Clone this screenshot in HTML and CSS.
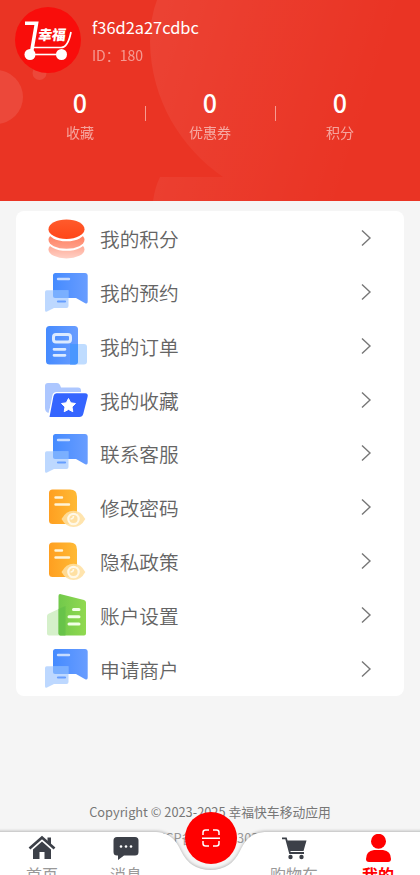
FILE: index.html
```html
<!DOCTYPE html>
<html lang="zh-CN">
<head>
<meta charset="utf-8">
<title>我的</title>
<link rel="stylesheet" href="styles.css">
</head>
<body>
<svg class="defs" width="0" height="0">
  <defs>
    <linearGradient id="blue"><stop offset="0" stop-color="#458bff"/><stop offset="1" stop-color="#699dff"/></linearGradient>
    <linearGradient id="orange"><stop offset="0" stop-color="#ff9f20"/><stop offset="1" stop-color="#ffba36"/></linearGradient>
    <linearGradient id="green"><stop offset="0" stop-color="#71c94b"/><stop offset="1" stop-color="#91d950"/></linearGradient>
    <linearGradient id="coin" x2="0" y2="1"><stop offset="0" stop-color="#ff5b2c"/><stop offset="1" stop-color="#ff4618"/></linearGradient>
    <linearGradient id="coin2" x2="0" y2="1"><stop offset="0" stop-color="#ff7654"/><stop offset="1" stop-color="#ffa08a"/></linearGradient>
    <linearGradient id="coin3" x2="0" y2="1"><stop offset="0" stop-color="#ff9a83"/><stop offset="1" stop-color="#ffd0c5"/></linearGradient>
    <linearGradient id="sheen" gradientUnits="userSpaceOnUse" x1="150" y1="40" x2="370" y2="110"><stop offset="0" stop-color="#fff" stop-opacity=".07"/><stop offset="1" stop-color="#fff" stop-opacity="0"/></linearGradient>
  </defs>
  <symbol id="i-points" viewBox="0 0 48 48">
    <ellipse cx="24.500" cy="33.500" rx="18" ry="9" fill="url(#coin3)"/>
    <ellipse cx="24.500" cy="25" rx="19" ry="9.800" fill="#fff"/>
    <ellipse cx="24.500" cy="23.800" rx="18" ry="9" fill="url(#coin2)"/>
    <ellipse cx="24.500" cy="14.500" rx="19" ry="10.800" fill="#fff"/>
    <ellipse cx="24.500" cy="13.200" rx="18" ry="9.700" fill="url(#coin)"/>
  </symbol>
  <symbol id="i-chat" viewBox="0 0 48 48">
    <path d="M11 5.500q0-2.500 2.500-2.500h29.800q2.400 0 2.400 2.500v26q0 3-2.500 1.700L34 28H13.500Q11 28 11 25.500z" fill="url(#blue)"/>
    <path d="M3 22q0-1.800 1.800-1.800h21.700V36q0 2-2 2H12l-7 3.500q-2.200 1-2-1.500z" fill="#a7cbff" opacity=".75"/>
    <path d="M11 20.200h15.500V28H13.500Q11 28 11 25.500z" fill="#6ba6ff" opacity=".6"/>
    <path d="M16 9h11" stroke="#c7dcff" stroke-width="2.400" stroke-linecap="round"/>
    <path d="M16 31.500h7" stroke="#669eff" stroke-width="2.200" stroke-linecap="round"/>
  </symbol>
  <symbol id="i-order" viewBox="0 0 48 48">
    <rect x="27.500" y="21" width="17.500" height="20.500" rx="3" fill="#bfdcff"/>
    <rect x="4" y="3" width="32" height="38.500" rx="3.500" fill="url(#blue)"/>
    <path d="M28 21h8v17q0 3.500-3 3.500h-5z" fill="#4997ff"/>
    <rect x="11.500" y="11.500" width="17" height="7.500" rx="2.500" fill="none" stroke="#dceaff" stroke-width="3"/>
    <path d="M12 26.300h11M12 32.300h11" stroke="#dceaff" stroke-width="2.700" stroke-linecap="round"/>
  </symbol>
  <symbol id="i-fav" viewBox="0 0 48 48">
    <path d="M3 9q0-3 3-3h9q2 0 3 2l1 2.500h17q3 0 3 3V20H11L6.500 36Q3 35 3 31z" fill="#adc7ff"/>
    <path d="M14.500 16.200H43q3.500 0 2.600 3.500l-4.300 17q-.9 3.300-4 3.300H7.500l4-21q.6-2.800 3-2.800z" fill="#3565ff" stroke="#fff" stroke-width="2.400" paint-order="stroke"/>
    <path d="m26.500 21.500 2.200 4.300 4.800.7-3.500 3.400.8 4.800-4.300-2.300-4.300 2.300.8-4.800-3.500-3.400 4.800-.7z" fill="#fff" stroke="#fff" stroke-linejoin="round"/>
  </symbol>
  <symbol id="i-doc" viewBox="0 0 48 48">
    <path d="M7 8q0-3.500 3.500-3.500H28q7 0 7 7V35q0 4-4 4H10.500Q7 39 7 35.500z" fill="url(#orange)"/>
    <path d="M13.500 12.500h6.500M13.500 19.500h13.500" stroke="#fff4d7" stroke-width="2.400" stroke-linecap="round"/>
    <path d="M19.500 34q4.500-8.300 12-8.300T43.300 34q-4.300 8-11.800 8t-12-8z" fill="#ffe0a2" opacity=".88"/>
    <circle cx="31.500" cy="34" r="5.200" fill="#ffe0a2" stroke="#fff8e7" stroke-width="2.200"/>
    <path d="M28.500 34a3 3 0 0 0 3-3" fill="none" stroke="#fff8e7" stroke-width="1.500"/>
  </symbol>
  <symbol id="i-account" viewBox="0 0 48 48">
    <path d="M5 24q0-1.500 1.500-2.200L23 14v29.500H7q-2 0-2-2z" fill="#d5f0ca"/>
    <path d="M16.500 4q0-2.500 2.500-1.800L42 8q2 .5 2 2.500v31q0 2-2 2H18.500q-2 0-2-2z" fill="url(#green)"/>
    <path d="M16.500 17 23.500 14v29.500h-5q-2 0-2-2z" fill="#61bf48" opacity=".65"/>
    <path d="M31.500 17.500H37M27 24.700h10M27 31.900h10" stroke="#f2ffe7" stroke-width="3" stroke-linecap="round"/>
  </symbol>
  <symbol id="i-arrow" viewBox="0 0 12 18"><path d="m2 1.500 8 7.500-8 7.500" fill="none" stroke="#777" stroke-width="1.400"/></symbol>
</svg>
<div class="screen">
  <header class="hero">
    <svg class="hero-art" viewBox="0 0 420 201">
      <circle cx="-4" cy="97" r="27" fill="#fff" opacity=".1"/>
      <circle cx="39.500" cy="73" r="7" fill="#fff" opacity=".1"/>
      <path d="M157 0Q150 18 150 42C151 100 181 148 223 177H420V0z" fill="url(#sheen)"/>
      <path d="M160 177H420V201H153Q155 187 160 177z" fill="url(#sheen)"/>
    </svg>
    <div class="profile">
      <svg class="avatar" viewBox="0 0 66 66">
        <circle cx="33" cy="33" r="33" fill="#f90d0b"/>
        <path d="M10 16.200h11.500l-5 29" fill="none" stroke="#fff" stroke-width="3.600"/>
        <path d="M18 40.500h28q7 0 10-15.500" fill="none" stroke="#fff" stroke-width="1.700"/>
        <path d="M15 47.500h32" stroke="#fff" stroke-width="1.600"/>
        <circle cx="15" cy="47.500" r="5.500" fill="#fff"/><circle cx="46.500" cy="47.500" r="5.500" fill="#fff"/>
        <text class="logo-text" x="22" y="32.800" transform="translate(5 0) skewX(-8)">幸福</text>
      </svg>
      <div class="who"><div class="name">f36d2a27cdbc</div><div class="uid">ID：180</div></div>
    </div>
    <div class="stats">
      <div class="stat"><b>0</b><span>收藏</span></div>
      <div class="stat"><b>0</b><span>优惠券</span></div>
      <div class="stat"><b>0</b><span>积分</span></div>
    </div>
  </header>
  <main class="menu">
    <div class="row"><svg class="ico"><use href="#i-points"/></svg><span>我的积分</span><svg class="arrow"><use href="#i-arrow"/></svg></div>
    <div class="row"><svg class="ico"><use href="#i-chat"/></svg><span>我的预约</span><svg class="arrow"><use href="#i-arrow"/></svg></div>
    <div class="row"><svg class="ico"><use href="#i-order"/></svg><span>我的订单</span><svg class="arrow"><use href="#i-arrow"/></svg></div>
    <div class="row"><svg class="ico"><use href="#i-fav"/></svg><span>我的收藏</span><svg class="arrow"><use href="#i-arrow"/></svg></div>
    <div class="row"><svg class="ico"><use href="#i-chat"/></svg><span>联系客服</span><svg class="arrow"><use href="#i-arrow"/></svg></div>
    <div class="row"><svg class="ico"><use href="#i-doc"/></svg><span>修改密码</span><svg class="arrow"><use href="#i-arrow"/></svg></div>
    <div class="row"><svg class="ico"><use href="#i-doc"/></svg><span>隐私政策</span><svg class="arrow"><use href="#i-arrow"/></svg></div>
    <div class="row"><svg class="ico"><use href="#i-account"/></svg><span>账户设置</span><svg class="arrow"><use href="#i-arrow"/></svg></div>
    <div class="row"><svg class="ico"><use href="#i-chat"/></svg><span>申请商户</span><svg class="arrow"><use href="#i-arrow"/></svg></div>
  </main>
  <footer class="legal"><div>Copyright © 2023-2025 幸福快车移动应用</div><div class="icp">蜀ICP备202300303号</div></footer>
  <nav class="tabbar">
    <svg class="bar-bg" viewBox="0 0 420 75">
      <path class="bar-shape" d="M-5 32H153C170 32 176 40 181 51Q190 70 210.500 70T240 51C245 40 251 32 268 32H425V85H-5z"/>
    </svg>
    <div class="tabs">
      <div class="tab"><svg viewBox="0 0 28 28"><path d="M1.500 14.500 14 3.500l12.500 11" fill="none" stroke="#3c4048" stroke-width="2.700"/><path d="M19.500 3.500H23V11l-3.500-3zM5 15.500l9-8 9 8V25h-6.500v-7h-5v7H5z" fill="#3c4048"/></svg><span>首页</span></div>
      <div class="tab"><svg viewBox="0 0 28 28"><path d="M5 3h18q3.500 0 3.500 3.500V18q0 3.500-3.500 3.500H12L6 26v-4.500H5Q1.500 21.500 1.500 18V6.500Q1.500 3 5 3z" fill="#3c4048"/><g fill="#fff"><circle cx="9" cy="12.500" r="1.300"/><circle cx="14" cy="12.500" r="1.300"/><circle cx="19" cy="12.500" r="1.300"/></g></svg><span>消息</span></div>
      <div class="tab"></div>
      <div class="tab"><svg viewBox="0 0 28 28"><path d="M2 4.300h4l4 14.700h14" fill="none" stroke="#3c4048" stroke-width="1.800"/><path d="M7 6.500h19.500L23.500 17H9.800z" fill="#3c4048"/><circle cx="10.500" cy="23" r="2.200" fill="#3c4048"/><circle cx="21.500" cy="23" r="2.200" fill="#3c4048"/></svg><span>购物车</span></div>
      <div class="tab active"><svg viewBox="0 0 28 28"><circle cx="14.500" cy="7.300" r="7.500" fill="red"/><path d="M2 25q0-8 8-9h9q8 1 8 9 0 3-3 3H5q-3 0-3-3z" fill="red"/></svg><span>我的</span></div>
    </div>
    <div class="scan"><svg viewBox="0 0 20 20"><path d="M2 7V4.500Q2 2 4.500 2H8M12 2h3.500Q18 2 18 4.500V7M2 13v2.500Q2 18 4.500 18H8M12 18h3.500q2.500 0 2.500-2.500V13M1 10.300h18" fill="none" stroke="#fff" stroke-width="1.500"/></svg></div>
  </nav>
</div>
</body>
</html>
```
FILE: styles.css
```css
* { box-sizing: border-box; }
body { margin: 0; background: #f5f5f5; font-family: "Noto Sans CJK SC", sans-serif; }
.defs { position: absolute; }
.screen { position: relative; width: 420px; height: 875px; overflow: hidden; display: flex; flex-direction: column; }
.hero { position: relative; height: 201px; background: #ea3424; color: #fff; flex: none; }
.hero-art { position: absolute; inset: 0; width: 420px; height: 201px; }
.profile { position: relative; display: flex; gap: 11px; padding: 7px 0 0 15px; }
.avatar { width: 66px; height: 66px; flex: none; }
.logo-text { font-size: 14px; font-weight: 900; fill: #fff; }
.who { padding-top: 7px; }
.name { font-size: 16.400px; line-height: 26px; }
.uid { font-size: 14px; line-height: 20px; margin-top: 5px; opacity: .5; }
.stats { position: relative; display: flex; padding: 15px 15px 0; }
.stat { position: relative; flex: 1; display: flex; flex-direction: column; align-items: center; }
.stat b { font-size: 25px; line-height: 29px; font-weight: 500; }
.stat span { font-size: 14px; line-height: 20px; margin-top: 5px; opacity: .55; }
.stat + .stat::before { content: ""; position: absolute; left: 0; top: 18px; width: 1px; height: 15px; background: #f69b91; }
.menu { margin: 10px 16px 0; height: 485px; background: #fff; border-radius: 8px; flex: none; }
.row { display: flex; align-items: center; height: 53.780px; padding: 1px 32px 0 26px; }
.ico { width: 48px; height: 48px; flex: none; margin-top: 3px; }
.row span { flex: 1; margin: 2px 0 0 10px; font-size: 19.700px; line-height: 28px; color: #646464; font-weight: 350; }
.arrow { width: 12px; height: 18px; }
.legal { margin-top: 103px; text-align: center; font-size: 12.800px; line-height: 26px; color: #777; }
.icp { color: #999; }
.tabbar { position: absolute; left: 0; bottom: 0; width: 420px; height: 75px; overflow: hidden; }
.bar-bg { position: absolute; left: 0; top: 0; width: 420px; height: 75px; }
.bar-shape { fill: #fff; filter: drop-shadow(0 -1px 1.500px rgba(0, 0, 0, .25)); }
.tabs { position: relative; display: flex; padding-top: 34px; }
.tab { flex: 1; display: flex; flex-direction: column; align-items: center; color: #999; font-size: 16px; }
.tab svg { width: 28px; height: 28px; }
.tab span { line-height: 24px; }
.active { color: red; font-weight: 700; }
.scan { position: absolute; left: 185px; top: 12px; width: 52px; height: 52px; border-radius: 50%; background: red; display: flex; align-items: center; justify-content: center; }
.scan svg { width: 20px; height: 20px; }
```
